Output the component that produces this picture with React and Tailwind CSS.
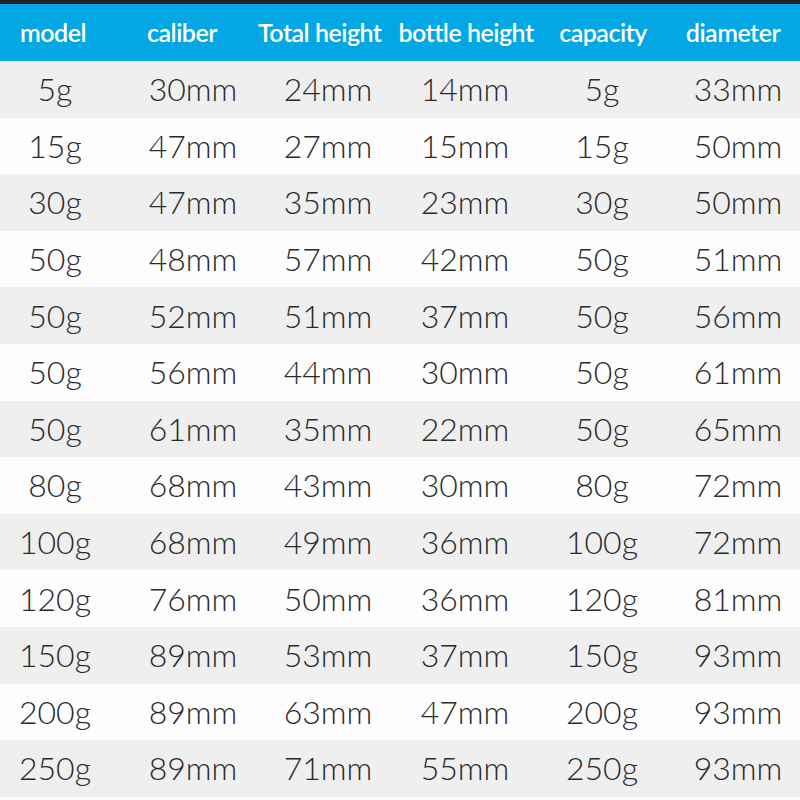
import React from 'react';

const rows = [
  ['5g', '30mm', '24mm', '14mm', '5g', '33mm'],
  ['15g', '47mm', '27mm', '15mm', '15g', '50mm'],
  ['30g', '47mm', '35mm', '23mm', '30g', '50mm'],
  ['50g', '48mm', '57mm', '42mm', '50g', '51mm'],
  ['50g', '52mm', '51mm', '37mm', '50g', '56mm'],
  ['50g', '56mm', '44mm', '30mm', '50g', '61mm'],
  ['50g', '61mm', '35mm', '22mm', '50g', '65mm'],
  ['80g', '68mm', '43mm', '30mm', '80g', '72mm'],
  ['100g', '68mm', '49mm', '36mm', '100g', '72mm'],
  ['120g', '76mm', '50mm', '36mm', '120g', '81mm'],
  ['150g', '89mm', '53mm', '37mm', '150g', '93mm'],
  ['200g', '89mm', '63mm', '47mm', '200g', '93mm'],
  ['250g', '89mm', '71mm', '55mm', '250g', '93mm'],
];

const headers = ['model', 'caliber', 'Total height', 'bottle height', 'capacity', 'diameter'];

export default function App() {
  return (
    <div className="w-[800px] h-[800px] overflow-hidden bg-[#fbfbfb]">
      <div className="h-[4px] bg-[#242424]" />
      {/* header */}
      <div
        className="grid h-[57px] grid-cols-[106px_152px_120px_176px_98px_148px] items-center bg-[#03a7e4] text-[25px] font-semibold tracking-[-0.5px] text-white"
        style={{ fontFamily: 'Lato, "Open Sans", sans-serif' }}
      >
        {headers.map((h, i) => (
          <div key={h} className={`whitespace-nowrap text-center ${i === 5 ? 'pl-[14px]' : ''}`}>
            {h}
          </div>
        ))}
      </div>
      {/* body */}
      <div style={{ fontFamily: 'Lato, "Noto Sans", sans-serif' }}>
        {rows.map((r, ri) => (
          <div
            key={ri}
            className={`grid h-[56.6px] grid-cols-[110px_166px_104px_170px_104px_146px] items-center text-[32px] font-light text-[#2a2a2a] ${
              ri % 2 === 0 ? 'bg-[#efefef]' : 'bg-[#fdfdfd]'
            }`}
          >
            {r.map((c, ci) => (
              <div key={ci} className={`whitespace-nowrap text-center ${ci === 5 ? 'pl-[22px]' : ''}`}>
                {c}
              </div>
            ))}
          </div>
        ))}
      </div>
    </div>
  );
}
